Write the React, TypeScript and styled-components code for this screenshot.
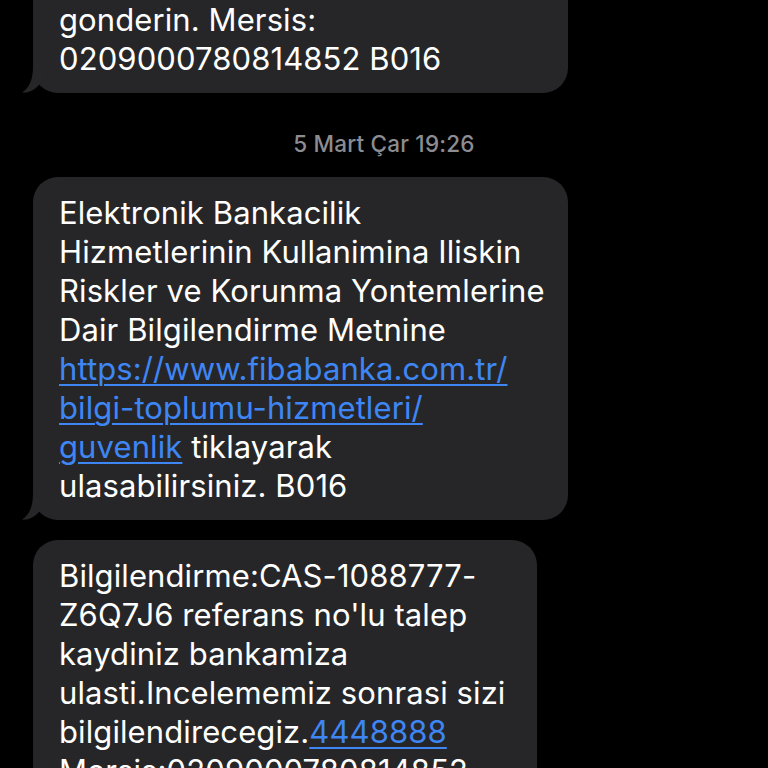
import React from "react";
import styled, { createGlobalStyle } from "styled-components";

const Global = createGlobalStyle`
  html, body { margin: 0; padding: 0; background: #000; }
  body { font-family: Inter, "Noto Sans", "Liberation Sans", sans-serif; -webkit-font-smoothing: antialiased; }
  #root { min-height: 768px; background: #000; overflow: hidden; }
`;

const Thread = styled.div`
  display: flex;
  flex-direction: column;
  align-items: flex-start;
  padding-left: 33px;
  height: 768px;
  overflow: hidden;
`;

const Bubble = styled.div<{ $w: number; $clipTop?: boolean; $mt?: number }>`
  position: relative;
  box-sizing: border-box;
  width: ${(p) => p.$w}px;
  margin-top: ${(p) => p.$mt ?? 0}px;
  background: #262628;
  border-radius: ${(p) => (p.$clipTop ? "0 0 25px 25px" : "25px")};
  padding: ${(p) => (p.$clipTop ? "0" : "16px")} 20px 15px 26px;
  color: #fff;
  font-size: 31px;
  line-height: 39px;
  letter-spacing: 0.1px;
  white-space: nowrap;
`;

const Link = styled.a`
  color: #3f86f5;
  text-decoration: underline;
  text-decoration-thickness: 1.5px;
  text-underline-offset: 4px;
`;

const Stamp = styled.div`
  align-self: center;
  margin: 39px 0 21px -33px;
  color: #8c8c91;
  font-size: 22.5px;
  line-height: 24px;
  font-weight: 500;
  letter-spacing: 0.2px;
`;

const TailSvg = styled.svg`
  position: absolute;
  left: -11px;
  bottom: 0;
  width: 30px;
  height: 26px;
`;

const Tail = () => (
  <TailSvg viewBox="0 0 30 26">
    <path
      d="M11 0 C11 13 7 21 0 25.6 C6 26.2 12 23.5 16.5 18.5 L26 8 L11 0 Z"
      fill="#262628"
    />
  </TailSvg>
);

export default function App() {
  return (
    <>
      <Global />
      <Thread>
        <Bubble $w={535} $clipTop>
          gonderin. Mersis:
          <br />
          0209000780814852 B016
          <Tail />
        </Bubble>
        <Stamp>5 Mart Çar 19:26</Stamp>
        <Bubble $w={535}>
          Elektronik Bankacilik
          <br />
          Hizmetlerinin Kullanimina Iliskin
          <br />
          Riskler ve Korunma Yontemlerine
          <br />
          Dair Bilgilendirme Metnine
          <br />
          <Link href="#">
            https://www.fibabanka.com.tr/
            <br />
            bilgi-toplumu-hizmetleri/
            <br />
            guvenlik
          </Link>{" "}
          tiklayarak
          <br />
          ulasabilirsiniz. B016
          <Tail />
        </Bubble>
        <Bubble $w={504} $mt={20}>
          Bilgilendirme:CAS-1088777-
          <br />
          Z6Q7J6 referans no'lu talep
          <br />
          kaydiniz bankamiza
          <br />
          ulasti.Incelememiz sonrasi sizi
          <br />
          bilgilendirecegiz.<Link href="#">4448888</Link>
          <br />
          Mersis:0209000780814852
          <br />
          B016
        </Bubble>
      </Thread>
    </>
  );
}
